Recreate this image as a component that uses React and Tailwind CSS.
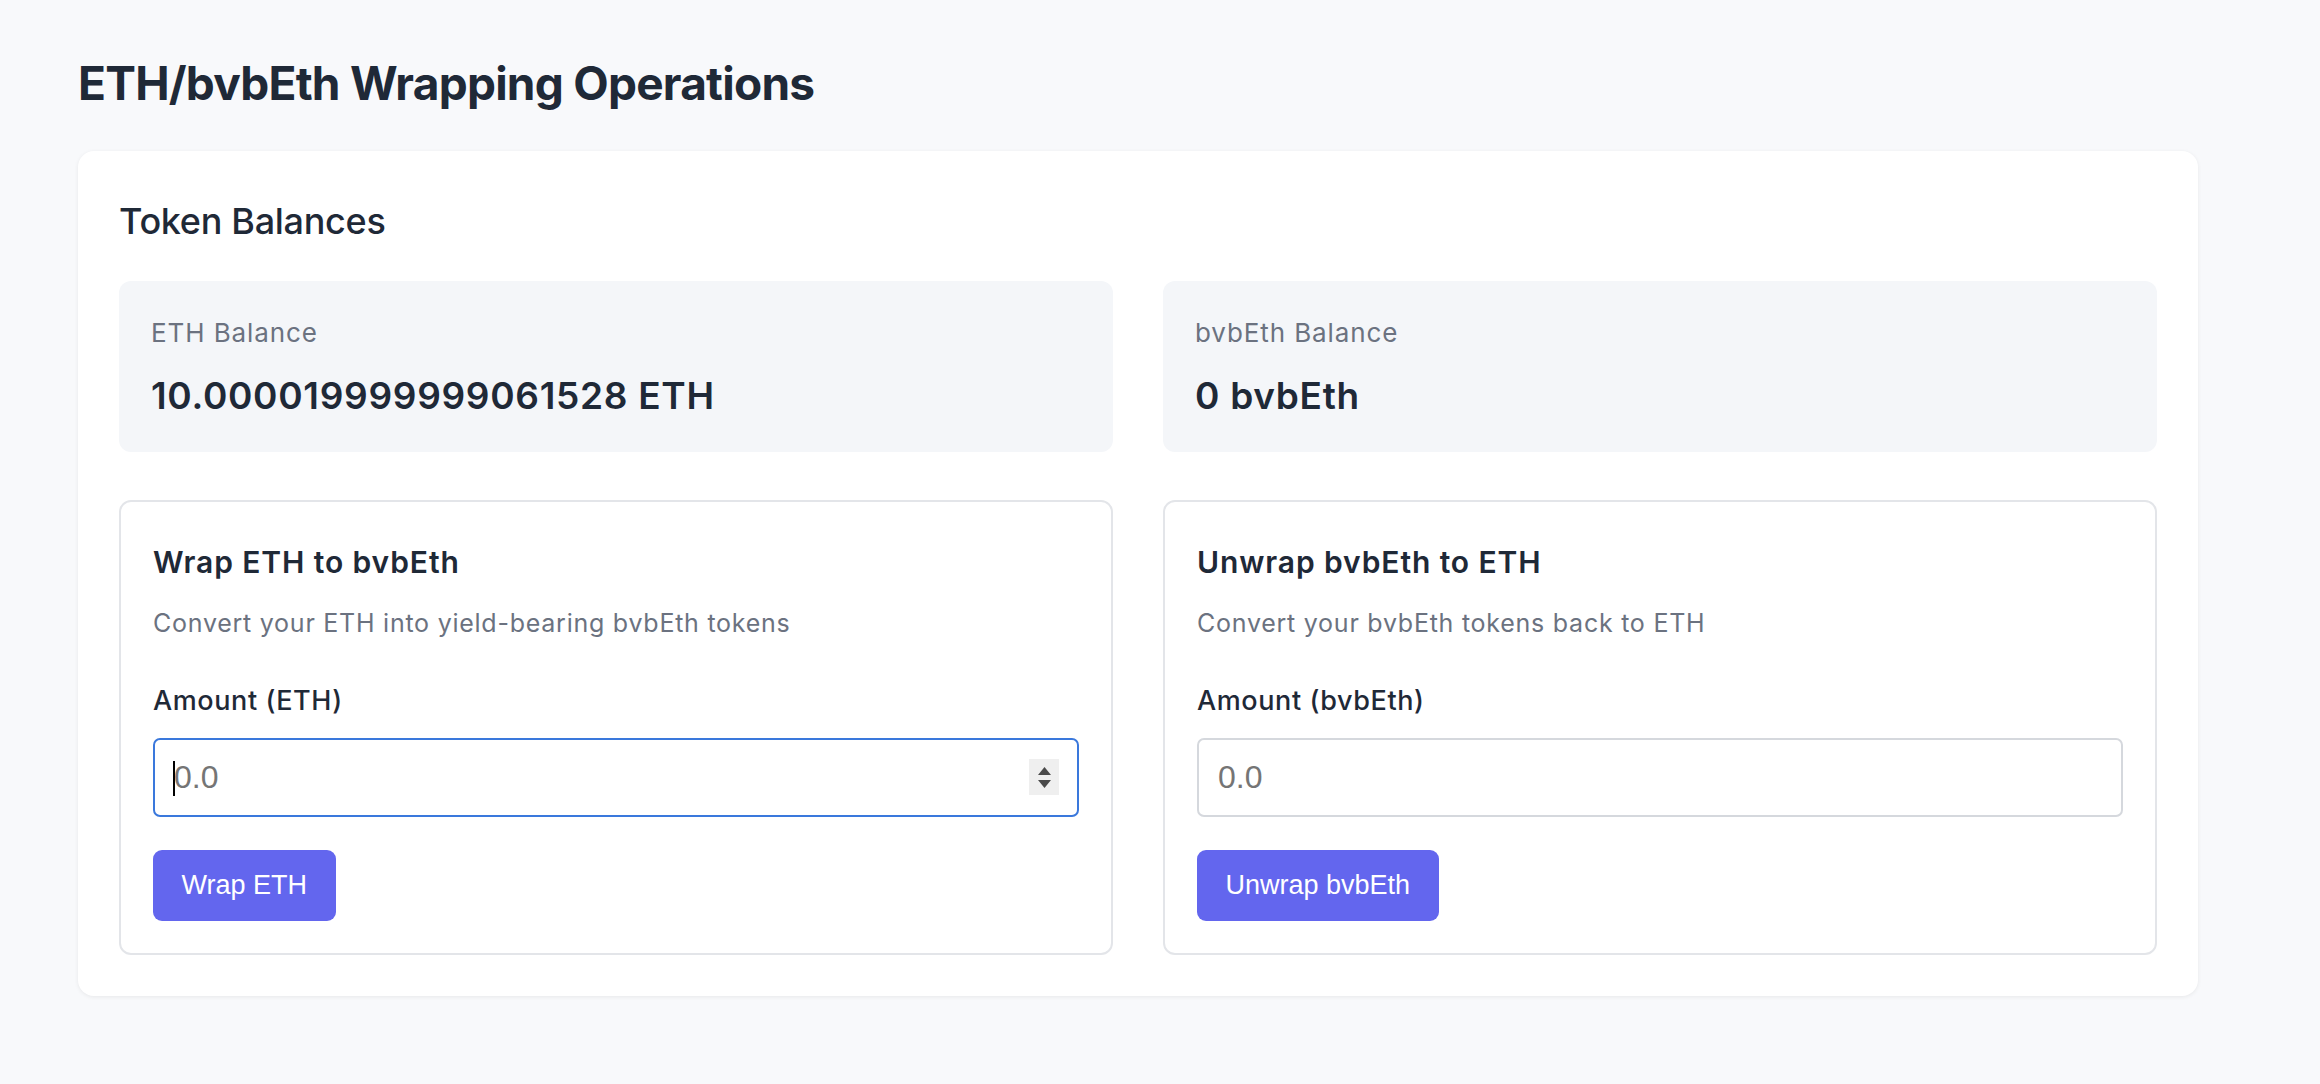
import { useState } from 'react'

function BalanceBox({ label, value }) {
  return (
    <div className="bg-[#f4f6f9] rounded-[12px] px-[32px] pt-[36px] pb-[34px]">
      <p className="text-[26px] leading-[32px] tracking-[0.9px] text-[#6b7280]">{label}</p>
      <p className="mt-[25px] text-[37px] leading-[44px] tracking-[0.7px] font-semibold text-[#1f2937]">{value}</p>
    </div>
  )
}

function AmountInput({ focused, value, onChange }) {
  return (
    <div className="relative mt-[20px]">
      <input
        type="text"
        placeholder="0.0"
        value={value}
        onChange={e => onChange(e.target.value)}
        className={`block w-full h-[79px] rounded-[7px] border-2 pl-[19px] pr-[60px] bg-white text-[32px] font-['Liberation_Sans',Arial,sans-serif] text-[#111827] placeholder-[#757575] caret-transparent outline-none ${
          focused ? 'border-[#3a78dc]' : 'border-[#d5d8dd]'
        }`}
      />
      {focused && (
        <>
          {/* caret */}
          <span className="absolute left-[20px] top-[23px] w-[2px] h-[35px] bg-black" />
          {/* number spinner */}
          <span className="absolute right-[20px] top-[21px] w-[30px] h-[36px] bg-[#efefef] flex flex-col items-center justify-center gap-[5px]">
            <svg width="13" height="8" viewBox="0 0 13 8"><path d="M6.5 0 L13 8 L0 8 Z" fill="#4a4a4a" /></svg>
            <svg width="13" height="8" viewBox="0 0 13 8"><path d="M0 0 L13 0 L6.5 8 Z" fill="#4a4a4a" /></svg>
          </span>
        </>
      )}
    </div>
  )
}

function OperationCard({ title, description, label, button, focused }) {
  const [amount, setAmount] = useState('')
  return (
    <div className="border-2 border-[#e3e5e9] rounded-[12px] px-[32px] pt-[40px] pb-[32px]">
      <h3 className="text-[30px] leading-[40px] tracking-[0.9px] font-semibold text-[#1f2937]">{title}</h3>
      <p className="mt-[25px] text-[25px] leading-[32px] tracking-[0.75px] text-[#6b7280]">{description}</p>
      <label className="block mt-[45px] text-[27px] leading-[34px] tracking-[0.6px] font-medium text-[#1f2937]">{label}</label>
      <AmountInput focused={focused} value={amount} onChange={setAmount} />
      <button className="mt-[33px] h-[71px] px-[28.5px] rounded-[9px] bg-[#6366ee] text-white text-[27px] font-['Liberation_Sans',Arial,sans-serif]">
        {button}
      </button>
    </div>
  )
}

export default function App() {
  return (
    <div className="min-h-screen bg-[#f8f9fb] pl-[78px] pt-[53px] pb-[40px] font-['Inter',sans-serif]">
      <h1 className="text-[46px] leading-[60px] font-bold text-[#1f2937] tracking-[-0.75px]">ETH/bvbEth Wrapping Operations</h1>

      <div className="mt-[38px] w-[2120px] bg-white rounded-[16px] shadow-[0_1px_4px_rgba(0,0,0,0.07)] px-[41px] pt-[48px] pb-[41px]">
        <h2 className="text-[36px] leading-[44px] tracking-[-0.3px] font-medium text-[#1f2937]">Token Balances</h2>

        <div className="mt-[38px] grid grid-cols-2 gap-[50px]">
          <BalanceBox label="ETH Balance" value="10.000019999999061528 ETH" />
          <BalanceBox label="bvbEth Balance" value="0 bvbEth" />
        </div>

        <div className="mt-[48px] grid grid-cols-2 gap-[50px]">
          <OperationCard
            title="Wrap ETH to bvbEth"
            description="Convert your ETH into yield-bearing bvbEth tokens"
            label="Amount (ETH)"
            button="Wrap ETH"
            focused
          />
          <OperationCard
            title="Unwrap bvbEth to ETH"
            description="Convert your bvbEth tokens back to ETH"
            label="Amount (bvbEth)"
            button="Unwrap bvbEth"
          />
        </div>
      </div>
    </div>
  )
}
